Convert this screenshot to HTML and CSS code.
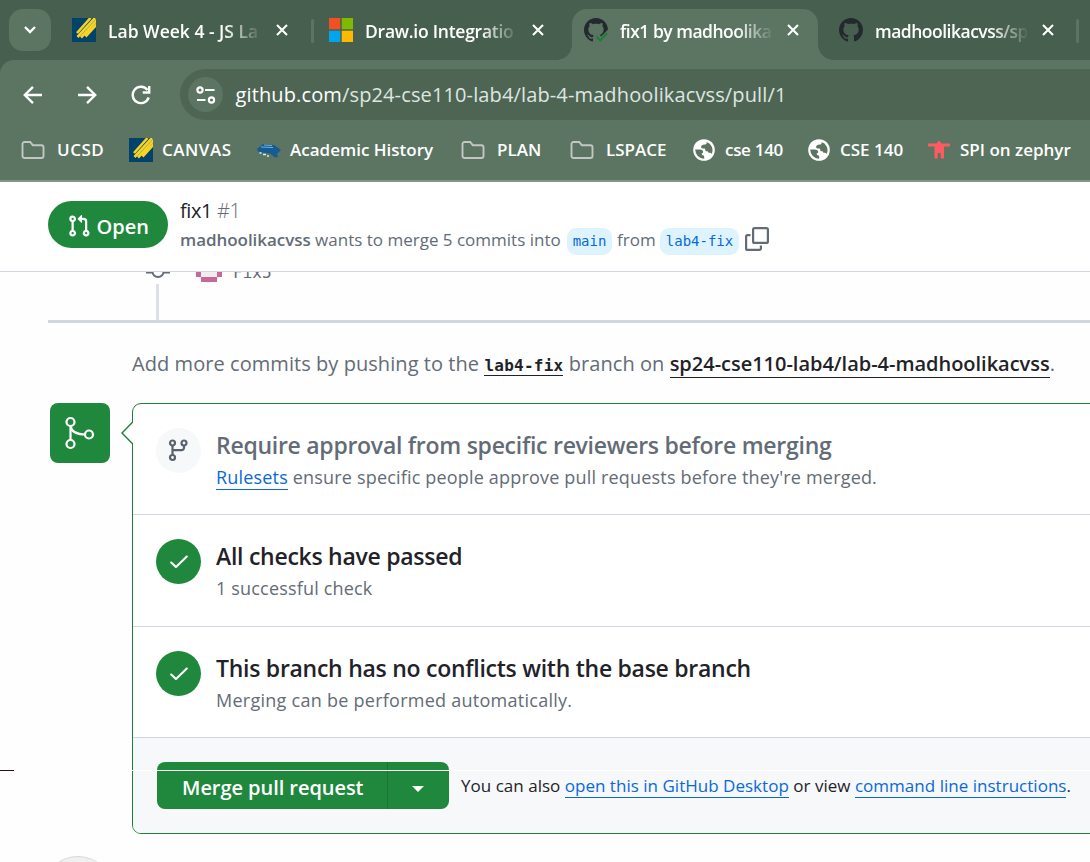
FILE: index.html
```
<!DOCTYPE html>
<html lang="en">
<head>
<meta charset="utf-8">
<title>fix1 by madhoolikacvss · Pull Request #1</title>
<link rel="stylesheet" href="styles.css">
</head>
<body>
<svg class="defs" aria-hidden="true">
  <symbol id="close" viewBox="0 0 12 12"><path d="M1 1l10 10M11 1L1 11" stroke="#fff" stroke-width="2.1" fill="none"/></symbol>
  <symbol id="canvas" viewBox="0 0 24 24"><path fill="#00426a" d="M0 0h24v24H0z"/><path d="M5 15L18.500 0M5.500 19L23 0M9 19.500L25 2M13.500 18.500L25 6" stroke="#f5d327" stroke-width="2.600" fill="none"/></symbol>
  <symbol id="cat" viewBox="0 0 16 16"><path fill="#24292f" d="M8 0C3.580 0 0 3.580 0 8c0 3.540 2.290 6.530 5.470 7.590.4.070.550-.170.550-.380 0-.190-.010-.820-.010-1.490-2.010.370-2.530-.490-2.690-.940-.090-.230-.480-.940-.820-1.130-.280-.150-.680-.520-.010-.530.630-.010 1.080.580 1.230.820.720 1.210 1.870.870 2.330.660.070-.520.280-.870.510-1.070-1.780-.2-3.640-.890-3.640-3.950 0-.870.310-1.590.820-2.150-.080-.2-.360-1.020.080-2.120 0 0 .670-.210 2.200.820.640-.180 1.320-.270 2-.270s1.360.090 2 .270c1.530-1.040 2.200-.820 2.200-.820.440 1.100.160 1.920.080 2.120.510.560.820 1.270.820 2.150 0 3.070-1.870 3.750-3.650 3.950.290.250.540.730.540 1.480 0 1.070-.010 1.930-.010 2.200 0 .210.150.460.550.380A8.010 8.010 0 0016 8c0-4.420-3.580-8-8-8z"/></symbol>
  <symbol id="folder" viewBox="0 0 24 20"><path d="M3.500 2h5.700l2.600 3.200h8.700a2 2 0 012 2V16a2 2 0 01-2 2h-17a2 2 0 01-2-2V4a2 2 0 012-2z" fill="none" stroke="#c3c7c4" stroke-width="1.900"/></symbol>
  <symbol id="globe" viewBox="0 0 22 22"><circle cx="11" cy="11" r="10.800" fill="#fff"/><path d="M13.600 2.900c.4 1.600-.4 2.500-2 2.700-2.400.1-3.700 1-3.500 2.700.1 1 1 1.200 2.300 1.200 1.300-.1 1.900.3 1.900 1.400 0 .9.500 1.300 1.400 1.300 1.200 0 1.700.5 1.700 1.600 1.600-.3 2.700.200 3.300 1A8.700 8.700 0 0013.600 2.900zM2.300 10.600h4.500c1.900 0 3.100.7 3.300 2 .1 1-.3 1.600-1.400 1.600l.3 1.800c1.500 0 2.200.9 2.200 2v1.700a8.700 8.700 0 01-8.900-9.100z" fill="#5b7562"/></symbol>
  <symbol id="check" viewBox="0 0 18 14"><path d="M1.200 7.500L6 12 16.800 1.500" fill="none" stroke="#fff" stroke-width="2.100" stroke-linecap="round" stroke-linejoin="round"/></symbol>
</svg>

<header class="browser">
  <nav class="tabs">
    <span class="tab-search"><svg width="14" height="10" viewBox="0 0 14 10"><path d="M2 2l5 5 5-5" fill="none" stroke="#fff" stroke-width="2.400"/></svg></span>
    <div class="tab t1"><svg class="fav"><use href="#canvas"/></svg><span class="tab-title">Lab Week 4 - JS La</span><svg class="x"><use href="#close"/></svg></div>
    <i class="sep s1"></i>
    <div class="tab t2"><svg class="fav" viewBox="0 0 24 24"><path fill="#f25022" d="M0 0h11.300v11.300H0z"/><path fill="#7fba00" d="M12.700 0H24v11.300H12.700z"/><path fill="#00a4ef" d="M0 12.700h11.300V24H0z"/><path fill="#ffb900" d="M12.700 12.700H24V24H12.700z"/></svg><span class="tab-title tight">Draw.io Integratio</span><svg class="x"><use href="#close"/></svg></div>
    <div class="tab active"><svg class="fav" viewBox="0 0 24 24"><use href="#cat" width="24" height="24"/><path d="M10 18l5-2.500 2 3 7-7V24H11z" fill="#5b7562"/><path d="M12.500 18.500l3.800 4L23 15" fill="none" stroke="#1a7f37" stroke-width="1.900"/></svg><span class="tab-title tighter">fix1 by madhoolika</span><svg class="x"><use href="#close"/></svg></div>
    <div class="tab t4"><svg class="fav"><use href="#cat"/></svg><span class="tab-title tighter">madhoolikacvss/sp</span><svg class="x"><use href="#close"/></svg></div>
    <i class="sep s2"></i>
  </nav>
  <div class="toolbar">
    <svg class="nav-icon" viewBox="0 0 20 20"><path d="M19 10H2M10 1.800L1.800 10l8.200 8.200" /></svg>
    <svg class="nav-icon" viewBox="0 0 20 20"><path d="M1 10h17M10 1.800l8.200 8.200-8.200 8.200" /></svg>
    <svg class="nav-icon" viewBox="0 0 20 20"><path d="M17.700 12.500A8.200 8.200 0 1116.500 5M18.200 1v6.500h-6.500"/></svg>
    <div class="omnibox">
      <span class="site"><svg width="20" height="18" viewBox="0 0 20 18" fill="none" stroke="#fff" stroke-width="2.200"><circle cx="4" cy="4" r="2.600"/><path d="M9 4h9.500M1 14h8.500"/><circle cx="15.500" cy="14" r="2.600"/></svg></span>
      <span class="url"><b>github.com</b>/sp24-cse110-lab4/lab-4-madhoolikacvss/pull/1</span>
    </div>
  </div>
  <div class="bookmarks">
    <span class="bm"><svg class="ic"><use href="#folder"/></svg><span class="wide">UCSD</span></span>
    <span class="bm near"><svg class="ic"><use href="#canvas"/></svg><span class="wide">CANVAS</span></span>
    <span class="bm near"><svg class="ic" viewBox="0 0 24 24"><path d="M0 11l6-5 11 1 7 5-4 4 1 3-3 .5-5-4-8-1-4-1z" fill="#155c93"/><path d="M4 9l12 .5M7 7l8 .5" stroke="#78b3d4" stroke-width="1"/><path d="M2.500 15h2M6 16.500h3M10 18h2" stroke="#dce9ef" stroke-width="1.500"/></svg><span>Academic History</span></span>
    <span class="bm"><svg class="ic"><use href="#folder"/></svg><span>PLAN</span></span>
    <span class="bm"><svg class="ic"><use href="#folder"/></svg><span>LSPACE</span></span>
    <span class="bm small"><svg class="ic"><use href="#globe"/></svg><span class="slim">cse 140</span></span>
    <span class="bm small"><svg class="ic"><use href="#globe"/></svg><span>CSE 140</span></span>
    <span class="bm small"><svg class="ic" viewBox="0 0 22 22"><path d="M0 4.500h8.500L11 1.500l2.500 3H22v3h-6V19.500h-3.300V14h-3v5.500H6.500V7.500H0z" fill="#ff5a5f"/></svg><span>SPI on zephyr</span></span>
  </div>
</header>

<section class="sticky">
  <span class="state"><svg width="24" height="24" viewBox="0 0 16 16" fill="#fff"><path d="M1.500 3.250a2.250 2.250 0 1 1 3 2.122v5.256a2.251 2.251 0 1 1-1.500 0V5.372A2.250 2.250 0 0 1 1.500 3.250Zm5.677-.177L9.573.677A.250.250 0 0 1 10 .854V2.500h1A2.500 2.500 0 0 1 13.500 5v5.628a2.251 2.251 0 1 1-1.500 0V5a1 1 0 0 0-1-1h-1v1.646a.250.250 0 0 1-.427.177L7.177 3.427a.250.250 0 0 1 0-.354ZM3.750 2.500a.750.750 0 1 0 0 1.500.750.750 0 0 0 0-1.500Zm0 9.500a.750.750 0 1 0 0 1.500.750.750 0 0 0 0-1.500Zm8.250.750a.750.750 0 1 0 1.500 0 .750.750 0 0 0-1.500 0Z"/></svg>Open</span>
  <div class="summary">
    <div class="pr-title">fix1 <span>#1</span></div>
    <div class="meta"><span class="meta-text"><b>madhoolikacvss</b> wants to merge 5 commits into</span><code>main</code><span class="from">from</span><code class="head">lab4-fix</code><svg width="24" height="24" viewBox="0 0 24 24" fill="none" stroke="#636c76" stroke-width="2.200"><rect x="8.100" y="1.100" width="14.800" height="14.800" rx="1.500"/><path d="M5.500 8.100H2.600a1.500 1.500 0 00-1.500 1.500v11.800a1.500 1.500 0 001.500 1.500h11.800a1.500 1.500 0 001.500-1.500v-3"/></svg></div>
  </div>
</section>

<main>
  <div class="commit-row">
    <svg class="dot" width="24" height="13" viewBox="0 0 24 13"><path d="M0 .5h6.500M17.500 .5H24M6.500 0a5.500 5 0 0011 0" fill="none" stroke="#636c76" stroke-width="2"/></svg>
    <svg class="avatar" width="26" height="13" viewBox="0 0 26 13"><path d="M0 0h26q-4 11-13 11T0 0z" fill="#eee"/><path d="M0 0h5v5H0zM21 0h5v5h-5zM5 5h16v5H5z" fill="#c9679a"/></svg>
    <span class="commit-name">Fix5</span>
  </div>
  <div class="stem"></div>
  <div class="rule"></div>
  <p class="push">Add more commits by pushing to the <code>lab4-fix</code> branch on <b>sp24-cse110-lab4/lab-4-madhoolikacvss</b>.</p>

  <div class="merge">
    <div class="merge-icon"><svg width="36" height="36" viewBox="0 0 36 36" fill="none" stroke="#fff" stroke-width="2.200"><circle cx="8.500" cy="7" r="4"/><circle cx="8.500" cy="29" r="4"/><circle cx="27" cy="19.500" r="4"/><path d="M8.500 11v14M8.500 11c1 6 6 8.500 14.500 8.500"/></svg></div>
    <div class="box">
      <svg class="notch" width="13" height="24" viewBox="0 0 13 24"><path d="M13 .8L2 12l11 11.200" fill="#fff" stroke="#1f7f3b" stroke-width="1.400"/></svg>
      <div class="item">
        <span class="round grey"><svg width="22" height="24" viewBox="0 0 22 24" fill="none" stroke="#59626c" stroke-width="2.200"><circle cx="4.500" cy="4" r="2.500"/><circle cx="16" cy="4" r="2.500"/><circle cx="4.500" cy="18.500" r="2.500"/><path d="M4.500 6.500V16M16 6.500v2.300a2.300 2.300 0 01-2.300 2.300H4.500"/></svg></span>
        <div><h3 class="muted">Require approval from specific reviewers before merging</h3><p><a>Rulesets</a> ensure specific people approve pull requests before they're merged.</p></div>
      </div>
      <div class="item taller">
        <span class="round"><svg width="18" height="14"><use href="#check"/></svg></span>
        <div><h3>All checks have passed</h3><p>1 successful check</p></div>
      </div>
      <div class="item">
        <span class="round"><svg width="18" height="14"><use href="#check"/></svg></span>
        <div><h3>This branch has no conflicts with the base branch</h3><p class="auto">Merging can be performed automatically.</p></div>
      </div>
      <div class="foot">
        <div class="button"><span class="label">Merge pull request</span><span class="caret"><svg width="12" height="6" viewBox="0 0 12 6"><path d="M0 0h12L6 6z" fill="#fff"/></svg></span></div>
        <p class="also">You can also <a>open this in GitHub Desktop</a> or view <a>command line instructions</a>.</p>
      </div>
    </div>
  </div>
  <div class="user"><span></span></div>
</main>
<i class="scan"></i><i class="scan-dark"></i>
</body>
</html>
```
FILE: styles.css
```
* { box-sizing: border-box; }
body {
  margin: 0;
  width: 1090px;
  height: 862px;
  overflow: hidden;
  position: relative;
  background: #fefefe;
  font-family: "Open Sans", "Noto Sans", sans-serif;
  color: #1f2328;
}
p, h3 { margin: 0; white-space: nowrap; }
svg { display: block; flex: none; }
.defs { position: absolute; width: 0; height: 0; }

.browser { height: 182px; background: #475f4e; border-bottom: 2px solid #84968a; }
.tabs { display: flex; height: 60px; padding: 9px 0 0 9px; }
.tab-search {
  width: 42px; height: 42px; border-radius: 14px; background: #5b7562;
  display: flex; align-items: center; justify-content: center; flex: none;
}
.tab { display: flex; flex: none; width: 246px; height: 51px; padding: 9px 0 0 12px; position: relative; }
.t1 { margin-left: 9px; }
.t1 .x { margin-left: 1px; }
.t2 { margin-left: 3px; }
.active { margin-left: 9px; background: #5b7562; border-radius: 15px 15px 0 0; }
.active::before, .active::after { content: ""; position: absolute; bottom: 0; width: 15px; height: 15px; }
.active::before { left: -15px; background: radial-gradient(circle at 0 0, transparent 14.5px, #5b7562 15px); }
.active::after { right: -15px; background: radial-gradient(circle at 100% 0, transparent 14.5px, #5b7562 15px); }
.t4 { margin-left: 9px; }
.fav { width: 24px; height: 24px; }
.tab-title {
  width: 152px; height: 30px; margin: 0 15px 0 12px; overflow: hidden; white-space: nowrap;
  font-size: 17.5px; line-height: 27px; font-weight: 600; color: #fff;
  -webkit-mask-image: linear-gradient(90deg, #000 116px, transparent 154px);
  mask-image: linear-gradient(90deg, #000 116px, transparent 154px);
}
.tight { letter-spacing: -.25px; }
.tighter { letter-spacing: -.5px; }
.x { width: 12px; height: 12px; margin-top: 6px; }
.sep { width: 3px; height: 24px; margin-top: 10px; border-radius: 2px; background: #5b7562; flex: none; }
.s1 { margin-left: 5px; }
.s2 { margin-left: 3px; }

.toolbar { display: flex; align-items: center; height: 60px; padding: 9px 0 0 23px; background: #5b7562; border-radius: 14px 0 0 0; }
.nav-icon { width: 20px; height: 20px; margin-right: 34px; fill: none; stroke: #fff; stroke-width: 2.4; }
.omnibox {
  display: flex; align-items: center; height: 51px; flex: 1; margin-left: -5px; padding-left: 8px;
  background: #4e6554; border-radius: 26px 0 0 26px;
}
.site { display: flex; align-items: center; justify-content: center; width: 35px; height: 35px; border-radius: 50%; background: #5b7562; }
.url { margin-left: 12.5px; font-size: 20px; letter-spacing: .13px; color: #dfe5e0; white-space: nowrap; }
.url b { font-weight: 400; color: #fff; }
.bookmarks {
  display: grid; grid-template-columns: 108px 128px 204px 109px 123px 115px 120px 160px;
  height: 60px; padding-left: 21px; background: #5b7562;
}
.bm { display: flex; align-items: center; gap: 12px; color: #fff; font-size: 17px; font-weight: 600; white-space: nowrap; }
.bm > span { padding-bottom: 2px; }
.bm .wide { letter-spacing: .5px; }
.bm .slim { letter-spacing: -.3px; }
.near { gap: 9px; }
.small { gap: 10px; }
.ic { width: 24px; height: 24px; }
.small .ic { width: 22px; height: 22px; }

.sticky { display: flex; gap: 12px; height: 90px; padding: 19px 0 0 48px; border-bottom: 1px solid #d0d7de; background: #fff; }
.state {
  display: flex; align-items: center; gap: 6px; width: 120px; height: 47px; padding: 3px 0 0 18.5px;
  border-radius: 24px; background: #1f883d; color: #fff; font-size: 20px; font-weight: 600;
}
.pr-title { height: 20px; line-height: 20px; font-size: 20px; letter-spacing: -.4px; }
.pr-title span { font-weight: 300; color: #636c76; }
.meta { display: flex; align-items: center; height: 27px; margin-top: 7px; font-size: 17px; color: #636c76; white-space: nowrap; }
.meta-text { width: 387px; padding-bottom: 4px; }
.meta b { font-weight: 600; letter-spacing: -.05px; }
.meta svg { margin-bottom: 5px; }
.meta code {
  width: 45px; height: 27px; line-height: 27px; text-align: center; border-radius: 9px;
  background: #ddf4ff; color: #0969da; font-family: "DejaVu Sans Mono", monospace; font-size: 14px;
}
.from { width: 48px; padding: 0 0 4px 5px; }
.meta code.head { width: 79px; margin-right: 6px; }

.commit-row { display: flex; height: 12px; overflow: hidden; padding-left: 146px; }
.avatar { margin-left: 26px; }
.commit-name { margin-left: 11px; margin-top: -11px; height: 24px; line-height: 24px; font-family: "DejaVu Sans Mono", monospace; font-size: 16px; color: #636c76; }
.stem { width: 3px; height: 36px; margin-left: 156px; background: #dce1e6; }
.rule { height: 3px; margin-left: 48px; background: #d0d7de; }
.push { height: 80px; padding: 27px 0 0 132px; font-size: 20px; line-height: 28px; letter-spacing: .06px; color: #636c76; }
.push code, .push b { color: #1f2328; font-weight: 600; border-bottom: 1px solid #1f2328; }
.push b { letter-spacing: -.02px; }
.push code { font-family: "DejaVu Sans Mono", monospace; font-size: 16px; font-weight: 700; letter-spacing: .25px; }
.merge { display: flex; padding-left: 50px; }
.merge-icon { width: 60px; height: 60px; margin-right: 22px; border-radius: 8px; background: #1f883d; display: flex; align-items: center; justify-content: center; flex: none; }
.box { position: relative; width: 980px; height: 431px; flex: none; border: 1px solid #1f7f3b; border-radius: 9px; background: #fff; }
.notch { position: absolute; left: -13px; top: 17px; }
.item { display: flex; gap: 15px; height: 111px; padding: 24px 0 0 23px; border-bottom: 1px solid #d0d7de; }
.taller { height: 112px; }
.round { display: flex; align-items: center; justify-content: center; width: 45px; height: 45px; border-radius: 50%; background: #1f883d; flex: none; }
.grey { background: #f6f8fa; }
.item h3 { height: 36px; margin-top: -1px; line-height: 36px; font-size: 23px; font-weight: 600; letter-spacing: -.27px; }
.item .muted { color: #636c76; }
.item p { margin-top: 1px; line-height: 27px; font-size: 18px; letter-spacing: .18px; color: #636c76; }
.item .auto { letter-spacing: .26px; }
a { color: #0969da; border-bottom: 1px solid #0969da; }
.foot { display: flex; height: 95px; padding: 24px 0 0 24px; background: #f6f8fa; border-radius: 0 0 8px 8px; }
.button { display: flex; width: 292px; height: 47px; border-radius: 8px; background: #1f883d; color: #fff; margin-right: 12px; flex: none; overflow: hidden; }
.label { width: 231px; padding-left: 25px; line-height: 52px; font-size: 20px; font-weight: 600; letter-spacing: -.05px; border-right: 1px solid #1a7434; white-space: nowrap; }
.caret { display: flex; flex: 1; align-items: center; justify-content: center; padding: 6px 2px 0 0; }
.also { line-height: 24px; padding-top: 11.5px; font-size: 17px; letter-spacing: .02px; }
.user { height: 28px; padding: 22px 0 0 42px; overflow: hidden; }
.user span { display: block; width: 72px; height: 72px; border-radius: 50%; background: #f0f0f0; border: 1px solid #d8d8d8; }
.scan, .scan-dark { position: absolute; top: 770px; height: 1px; }
.scan { left: 72px; right: 0; background: #fff; }
.scan-dark { left: 0; width: 14px; background: #26101a; }
```
